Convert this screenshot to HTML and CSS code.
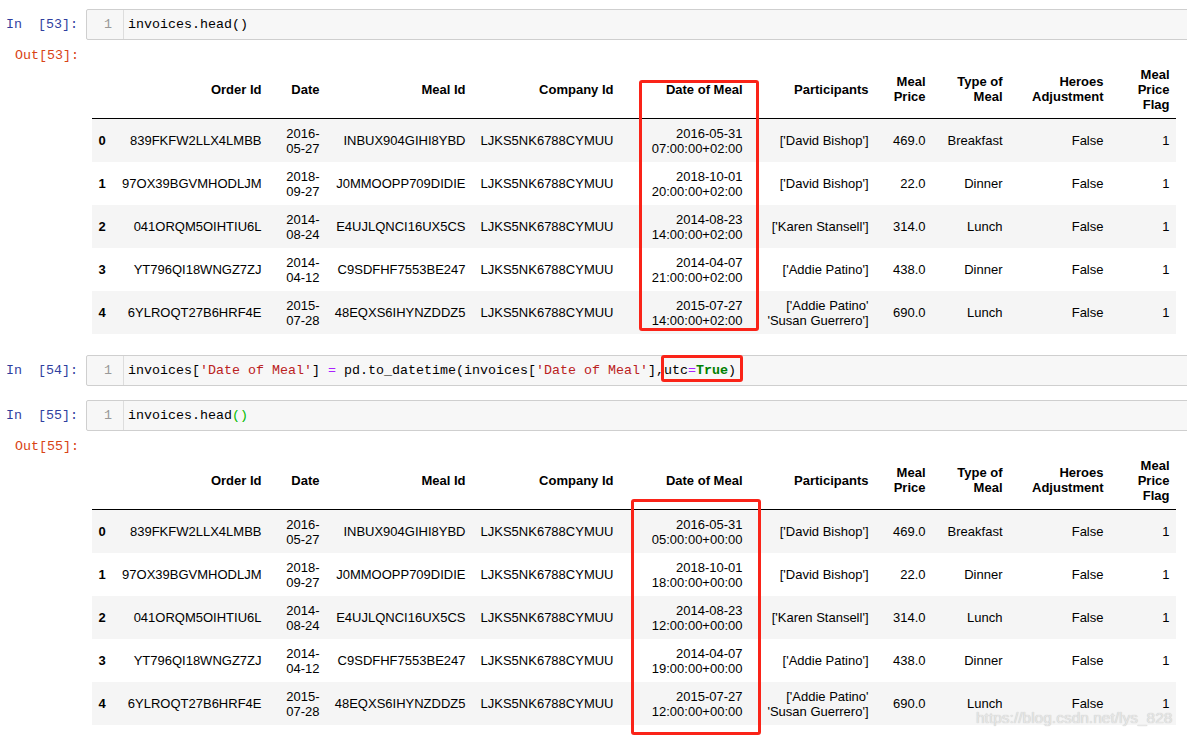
FILE: index.html
```html
<!DOCTYPE html>
<html>
<head>
<meta charset="utf-8">
<link rel="stylesheet" href="styles.css">
</head>
<body>
<div class="notebook">

  <div class="cell">
    <div class="in-row">
      <div class="prompt in-prompt">In  [53]:</div>
      <div class="input"><div class="gutter">1</div><div class="code">invoices.head()</div></div>
    </div>
    <div class="out-row">
      <div class="prompt out-prompt">Out[53]:</div>
      <div class="output">
        <table class="df">
          <colgroup>
            <col class="c-idx"><col class="c-order"><col class="c-date"><col class="c-meal"><col class="c-comp"><col class="c-dom"><col class="c-part"><col class="c-price"><col class="c-type"><col class="c-hero"><col class="c-flag">
          </colgroup>
          <thead>
            <tr><th></th><th>Order Id</th><th>Date</th><th>Meal Id</th><th>Company Id</th><th>Date of Meal</th><th>Participants</th><th>Meal<br>Price</th><th>Type of<br>Meal</th><th>Heroes<br>Adjustment</th><th>Meal<br>Price<br>Flag</th></tr>
          </thead>
          <tbody>
            <tr><th>0</th><td>839FKFW2LLX4LMBB</td><td>2016-<br>05-27</td><td>INBUX904GIHI8YBD</td><td>LJKS5NK6788CYMUU</td><td>2016-05-31<br>07:00:00+02:00</td><td>['David Bishop']</td><td>469.0</td><td>Breakfast</td><td>False</td><td>1</td></tr>
            <tr><th>1</th><td>97OX39BGVMHODLJM</td><td>2018-<br>09-27</td><td>J0MMOOPP709DIDIE</td><td>LJKS5NK6788CYMUU</td><td>2018-10-01<br>20:00:00+02:00</td><td>['David Bishop']</td><td>22.0</td><td>Dinner</td><td>False</td><td>1</td></tr>
            <tr><th>2</th><td>041ORQM5OIHTIU6L</td><td>2014-<br>08-24</td><td>E4UJLQNCI16UX5CS</td><td>LJKS5NK6788CYMUU</td><td>2014-08-23<br>14:00:00+02:00</td><td>['Karen Stansell']</td><td>314.0</td><td>Lunch</td><td>False</td><td>1</td></tr>
            <tr><th>3</th><td>YT796QI18WNGZ7ZJ</td><td>2014-<br>04-12</td><td>C9SDFHF7553BE247</td><td>LJKS5NK6788CYMUU</td><td>2014-04-07<br>21:00:00+02:00</td><td>['Addie Patino']</td><td>438.0</td><td>Dinner</td><td>False</td><td>1</td></tr>
            <tr><th>4</th><td>6YLROQT27B6HRF4E</td><td>2015-<br>07-28</td><td>48EQXS6IHYNZDDZ5</td><td>LJKS5NK6788CYMUU</td><td>2015-07-27<br>14:00:00+02:00</td><td>['Addie Patino'<br>'Susan Guerrero']</td><td>690.0</td><td>Lunch</td><td>False</td><td>1</td></tr>
          </tbody>
        </table>
      </div>
    </div>
  </div>

  <div class="cell">
    <div class="in-row">
      <div class="prompt in-prompt">In  [54]:</div>
      <div class="input"><div class="gutter">1</div><div class="code">invoices[<span class="str">'Date of Meal'</span>] <span class="op">=</span> pd.to_datetime(invoices[<span class="str">'Date of Meal'</span>],utc<span class="op">=</span><span class="kw">True</span>)</div></div>
    </div>
  </div>

  <div class="cell">
    <div class="in-row">
      <div class="prompt in-prompt">In  [55]:</div>
      <div class="input"><div class="gutter">1</div><div class="code">invoices.head<span class="match">()</span></div></div>
    </div>
    <div class="out-row">
      <div class="prompt out-prompt">Out[55]:</div>
      <div class="output">
        <table class="df">
          <colgroup>
            <col class="c-idx"><col class="c-order"><col class="c-date"><col class="c-meal"><col class="c-comp"><col class="c-dom"><col class="c-part"><col class="c-price"><col class="c-type"><col class="c-hero"><col class="c-flag">
          </colgroup>
          <thead>
            <tr><th></th><th>Order Id</th><th>Date</th><th>Meal Id</th><th>Company Id</th><th>Date of Meal</th><th>Participants</th><th>Meal<br>Price</th><th>Type of<br>Meal</th><th>Heroes<br>Adjustment</th><th>Meal<br>Price<br>Flag</th></tr>
          </thead>
          <tbody>
            <tr><th>0</th><td>839FKFW2LLX4LMBB</td><td>2016-<br>05-27</td><td>INBUX904GIHI8YBD</td><td>LJKS5NK6788CYMUU</td><td>2016-05-31<br>05:00:00+00:00</td><td>['David Bishop']</td><td>469.0</td><td>Breakfast</td><td>False</td><td>1</td></tr>
            <tr><th>1</th><td>97OX39BGVMHODLJM</td><td>2018-<br>09-27</td><td>J0MMOOPP709DIDIE</td><td>LJKS5NK6788CYMUU</td><td>2018-10-01<br>18:00:00+00:00</td><td>['David Bishop']</td><td>22.0</td><td>Dinner</td><td>False</td><td>1</td></tr>
            <tr><th>2</th><td>041ORQM5OIHTIU6L</td><td>2014-<br>08-24</td><td>E4UJLQNCI16UX5CS</td><td>LJKS5NK6788CYMUU</td><td>2014-08-23<br>12:00:00+00:00</td><td>['Karen Stansell']</td><td>314.0</td><td>Lunch</td><td>False</td><td>1</td></tr>
            <tr><th>3</th><td>YT796QI18WNGZ7ZJ</td><td>2014-<br>04-12</td><td>C9SDFHF7553BE247</td><td>LJKS5NK6788CYMUU</td><td>2014-04-07<br>19:00:00+00:00</td><td>['Addie Patino']</td><td>438.0</td><td>Dinner</td><td>False</td><td>1</td></tr>
            <tr><th>4</th><td>6YLROQT27B6HRF4E</td><td>2015-<br>07-28</td><td>48EQXS6IHYNZDDZ5</td><td>LJKS5NK6788CYMUU</td><td>2015-07-27<br>12:00:00+00:00</td><td>['Addie Patino'<br>'Susan Guerrero']</td><td>690.0</td><td>Lunch</td><td>False</td><td>1</td></tr>
          </tbody>
        </table>
      </div>
    </div>
  </div>

</div>

<div class="mark mark-1"></div>
<div class="mark mark-2"></div>
<div class="mark mark-3"></div>
<div class="watermark">https://blog.csdn.net/lys_828</div>
</body>
</html>
```

FILE: styles.css
```css
html, body {
  margin: 0;
  padding: 0;
  background: #ffffff;
  overflow: hidden;
}

body {
  position: relative;
  width: 1187px;
  height: 737px;
  font-family: "Liberation Sans", Arial, sans-serif;
  color: #000;
}

.notebook {
  padding-top: 9px;
}

.cell {
  margin-bottom: 14px;
}

.in-row,
.out-row {
  display: flex;
  align-items: flex-start;
}

.prompt {
  flex: 0 0 86px;
  box-sizing: border-box;
  padding-right: 8px;
  text-align: right;
  white-space: pre;
  font-family: "Liberation Mono", "DejaVu Sans Mono", monospace;
  font-size: 13.33px;
  line-height: 17px;
}

.in-prompt {
  color: #303f9f;
  padding-top: 7px;
}

.out-prompt {
  color: #d84315;
  padding-top: 7px;
  padding-right: 7px;
}

.input {
  flex: 1 1 auto;
  display: flex;
  margin-right: -4px;
  background: #f7f7f7;
  border: 1px solid #cfcfcf;
  border-radius: 2px;
  height: 29px;
}

.gutter {
  flex: 0 0 37px;
  box-sizing: border-box;
  border-right: 1px solid #dddddd;
  text-align: right;
  padding-right: 11px;
  color: #999999;
  font-family: "Liberation Mono", "DejaVu Sans Mono", monospace;
  font-size: 13.33px;
  line-height: 29px;
}

.code {
  padding-left: 4px;
  white-space: pre;
  font-family: "Liberation Mono", "DejaVu Sans Mono", monospace;
  font-size: 13.33px;
  line-height: 29px;
  color: #000;
}

.str { color: #ba2121; }
.op { color: #aa22ff; }
.kw { color: #008000; font-weight: bold; }
.match { color: #00bb00; }

.output {
  flex: 1 1 auto;
  padding-left: 6px;
  padding-top: 20px;
  padding-bottom: 7px;
}

.df {
  table-layout: fixed;
  border-collapse: collapse;
  border-spacing: 0;
  width: 1084px;
  font-size: 13px;
  line-height: 15px;
}

.df th,
.df td {
  padding: 6.5px 6.5px;
  text-align: right;
  vertical-align: middle;
  white-space: nowrap;
  border: none;
}

.df thead th {
  font-weight: bold;
  border-bottom: 1px solid #000;
}

.df tbody th {
  font-weight: bold;
  text-align: left;
}

.df tbody tr:nth-child(odd) {
  background: #f5f5f5;
}

.c-idx { width: 20px; }
.c-order { width: 156px; }
.c-date { width: 58px; }
.c-meal { width: 146px; }
.c-comp { width: 148px; }
.c-dom { width: 129px; }
.c-part { width: 126px; }
.c-price { width: 57px; }
.c-type { width: 77px; }
.c-hero { width: 101px; }
.c-flag { width: 66px; }

.mark {
  position: absolute;
  box-sizing: border-box;
  border: 3px solid #fa2318;
  border-radius: 3px;
}

.mark-1 { left: 639px; top: 80px; width: 120px; height: 251px; }
.mark-2 { left: 631px; top: 499px; width: 130px; height: 236px; }
.mark-3 { left: 661px; top: 355px; width: 82px; height: 27px; }

.watermark {
  position: absolute;
  left: 976px;
  top: 709px;
  font-family: "Liberation Sans", Arial, sans-serif;
  font-size: 15.5px;
  color: #e6e6e6;
  text-shadow: 0 0 1px #b8b8b8;
  white-space: nowrap;
}
```
